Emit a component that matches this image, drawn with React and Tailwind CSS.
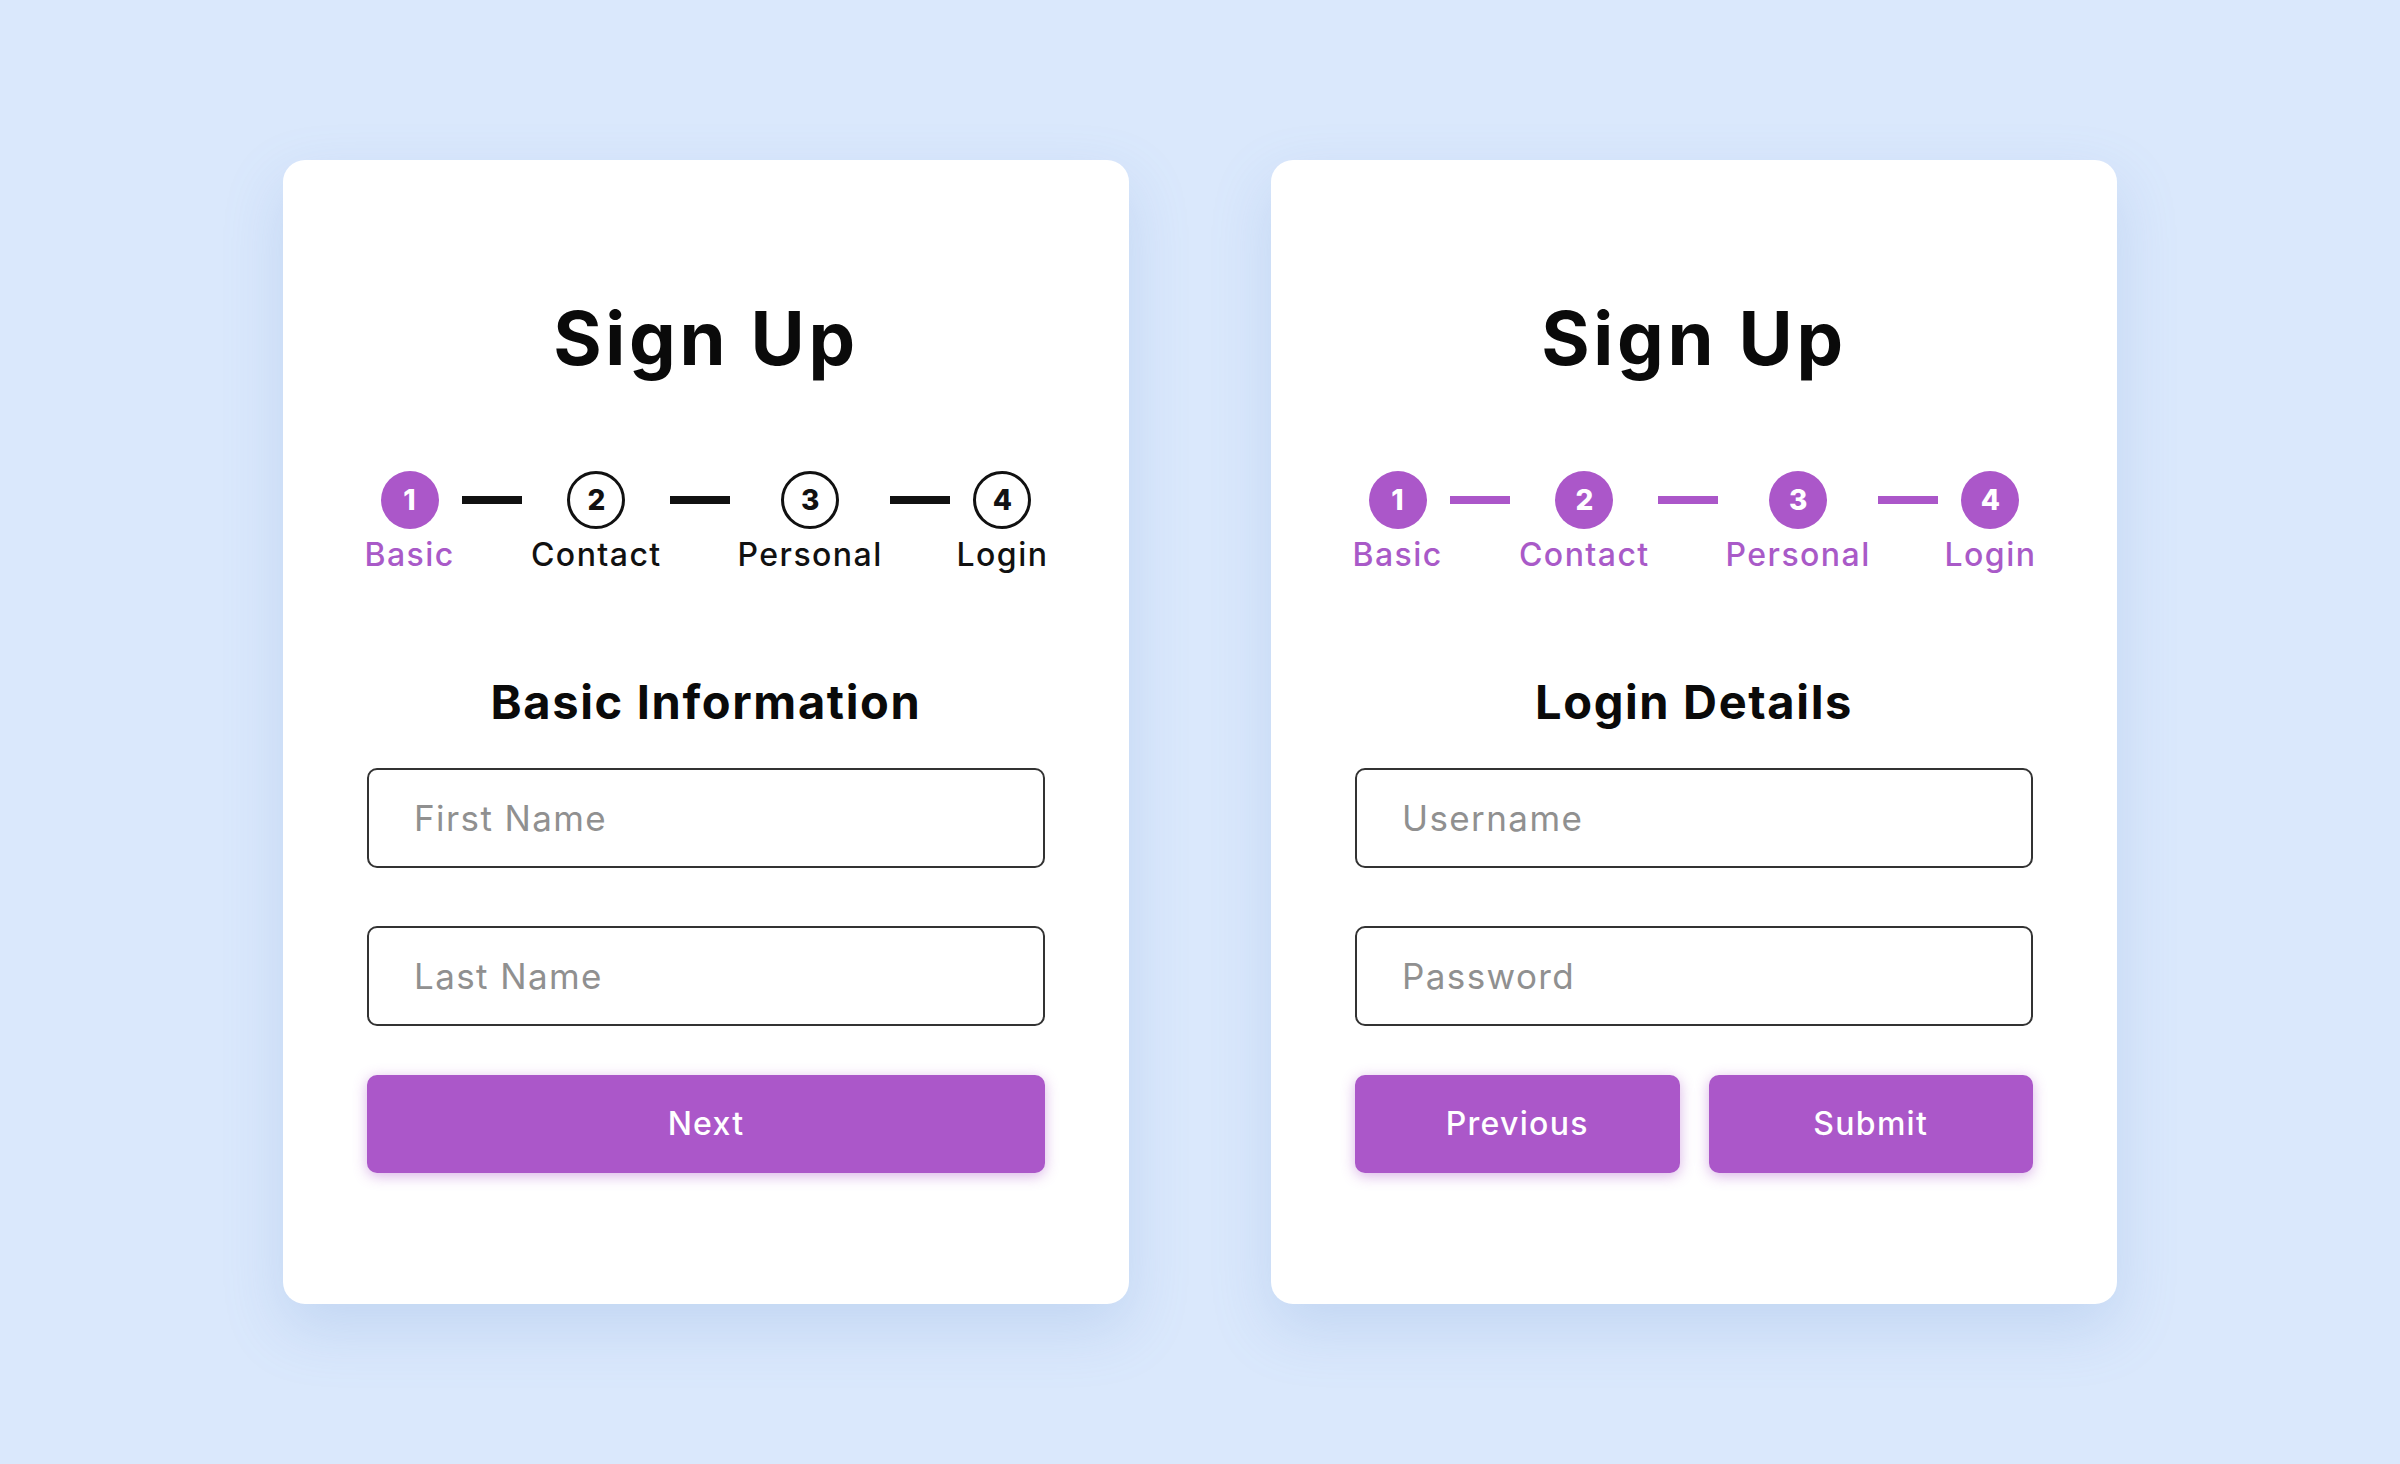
import React from "react";

const purple = "bg-[#ab57c9]";

const steps = [
  { num: 1, label: "Basic", w: "w-[85px]" },
  { num: 2, label: "Contact", w: "w-[128px]" },
  { num: 3, label: "Personal", w: "w-[139px]" },
  { num: 4, label: "Login", w: "w-[85px]" },
];

function Stepper({ current }) {
  const items = [];
  steps.forEach((step, i) => {
    const done = step.num <= current;
    if (i > 0) {
      items.push(
        <div
          key={"line" + i}
          className={
            "mt-[25px] h-[8px] w-[60px] shrink-0 " +
            (step.num <= current ? purple : "bg-[#111111]")
          }
        />
      );
    }
    items.push(
      <div
        key={step.num}
        className={"flex shrink-0 flex-col items-center " + step.w}
      >
        {done ? (
          <div className="flex h-[58px] w-[58px] items-center justify-center rounded-full bg-[#ab57c9] text-[28px] font-extrabold leading-none text-white">
            {step.num}
          </div>
        ) : (
          <div className="flex h-[58px] w-[58px] items-center justify-center rounded-full border-[3px] border-[#111111] bg-white text-[28px] font-extrabold leading-none text-[#111111]">
            {step.num}
          </div>
        )}
        <span
          className={
            "mt-[10px] whitespace-nowrap text-[32px] font-medium leading-none tracking-[0.045em] " +
            (done ? "text-[#a95ac8]" : "text-[#111111]")
          }
        >
          {step.label}
        </span>
      </div>
    );
  });
  return <div className="mt-[96px] flex items-start justify-between">{items}</div>;
}

function Field({ placeholder, type = "text", className = "" }) {
  return (
    <input
      type={type}
      placeholder={placeholder}
      className={
        "block h-[100px] w-full rounded-[10px] border-2 border-[#333333] bg-white pl-[45px] text-[35px] tracking-[0.04em] text-[#111] outline-none placeholder:text-[#909090] " +
        className
      }
    />
  );
}

function PurpleButton({ children }) {
  return (
    <button className="flex h-[98px] w-full items-center justify-center rounded-[10px] bg-[#ab57c9] text-[32px] font-medium tracking-[0.04em] text-white shadow-[0_3px_14px_rgba(171,87,201,0.45)]">
      {children}
    </button>
  );
}

function Card({ current, heading, fields, buttons }) {
  return (
    <div className="w-[846px] shrink-0 rounded-[22px] bg-white px-[84px] pb-[131px] pt-[141px] shadow-[0_24px_60px_rgba(110,150,210,0.22)]">
      <h1 className="text-center text-[74px] font-bold leading-none tracking-[0.05em] text-[#0a0a0a]">
        Sign Up
      </h1>
      <Stepper current={current} />
      <h2 className="mt-[107px] text-center text-[47px] font-bold leading-none tracking-[0.035em] text-[#0a0a0a]">
        {heading}
      </h2>
      <Field placeholder={fields[0]} className="mt-[43px]" />
      <Field
        placeholder={fields[1]}
        type={fields[1] === "Password" ? "password" : "text"}
        className="mt-[58px]"
      />
      <div className="mt-[49px]">{buttons}</div>
    </div>
  );
}

export default function App() {
  return (
    <div
      className="flex h-[1464px] w-full items-center justify-center gap-[142px] bg-[#dae8fc]"
      style={{ fontFamily: "Inter, 'Noto Sans', sans-serif" }}
    >
      <Card
        current={1}
        heading="Basic Information"
        fields={["First Name", "Last Name"]}
        buttons={<PurpleButton>Next</PurpleButton>}
      />
      <Card
        current={4}
        heading="Login Details"
        fields={["Username", "Password"]}
        buttons={
          <div className="grid grid-cols-2 gap-[29px]">
            <PurpleButton>Previous</PurpleButton>
            <PurpleButton>Submit</PurpleButton>
          </div>
        }
      />
    </div>
  );
}
